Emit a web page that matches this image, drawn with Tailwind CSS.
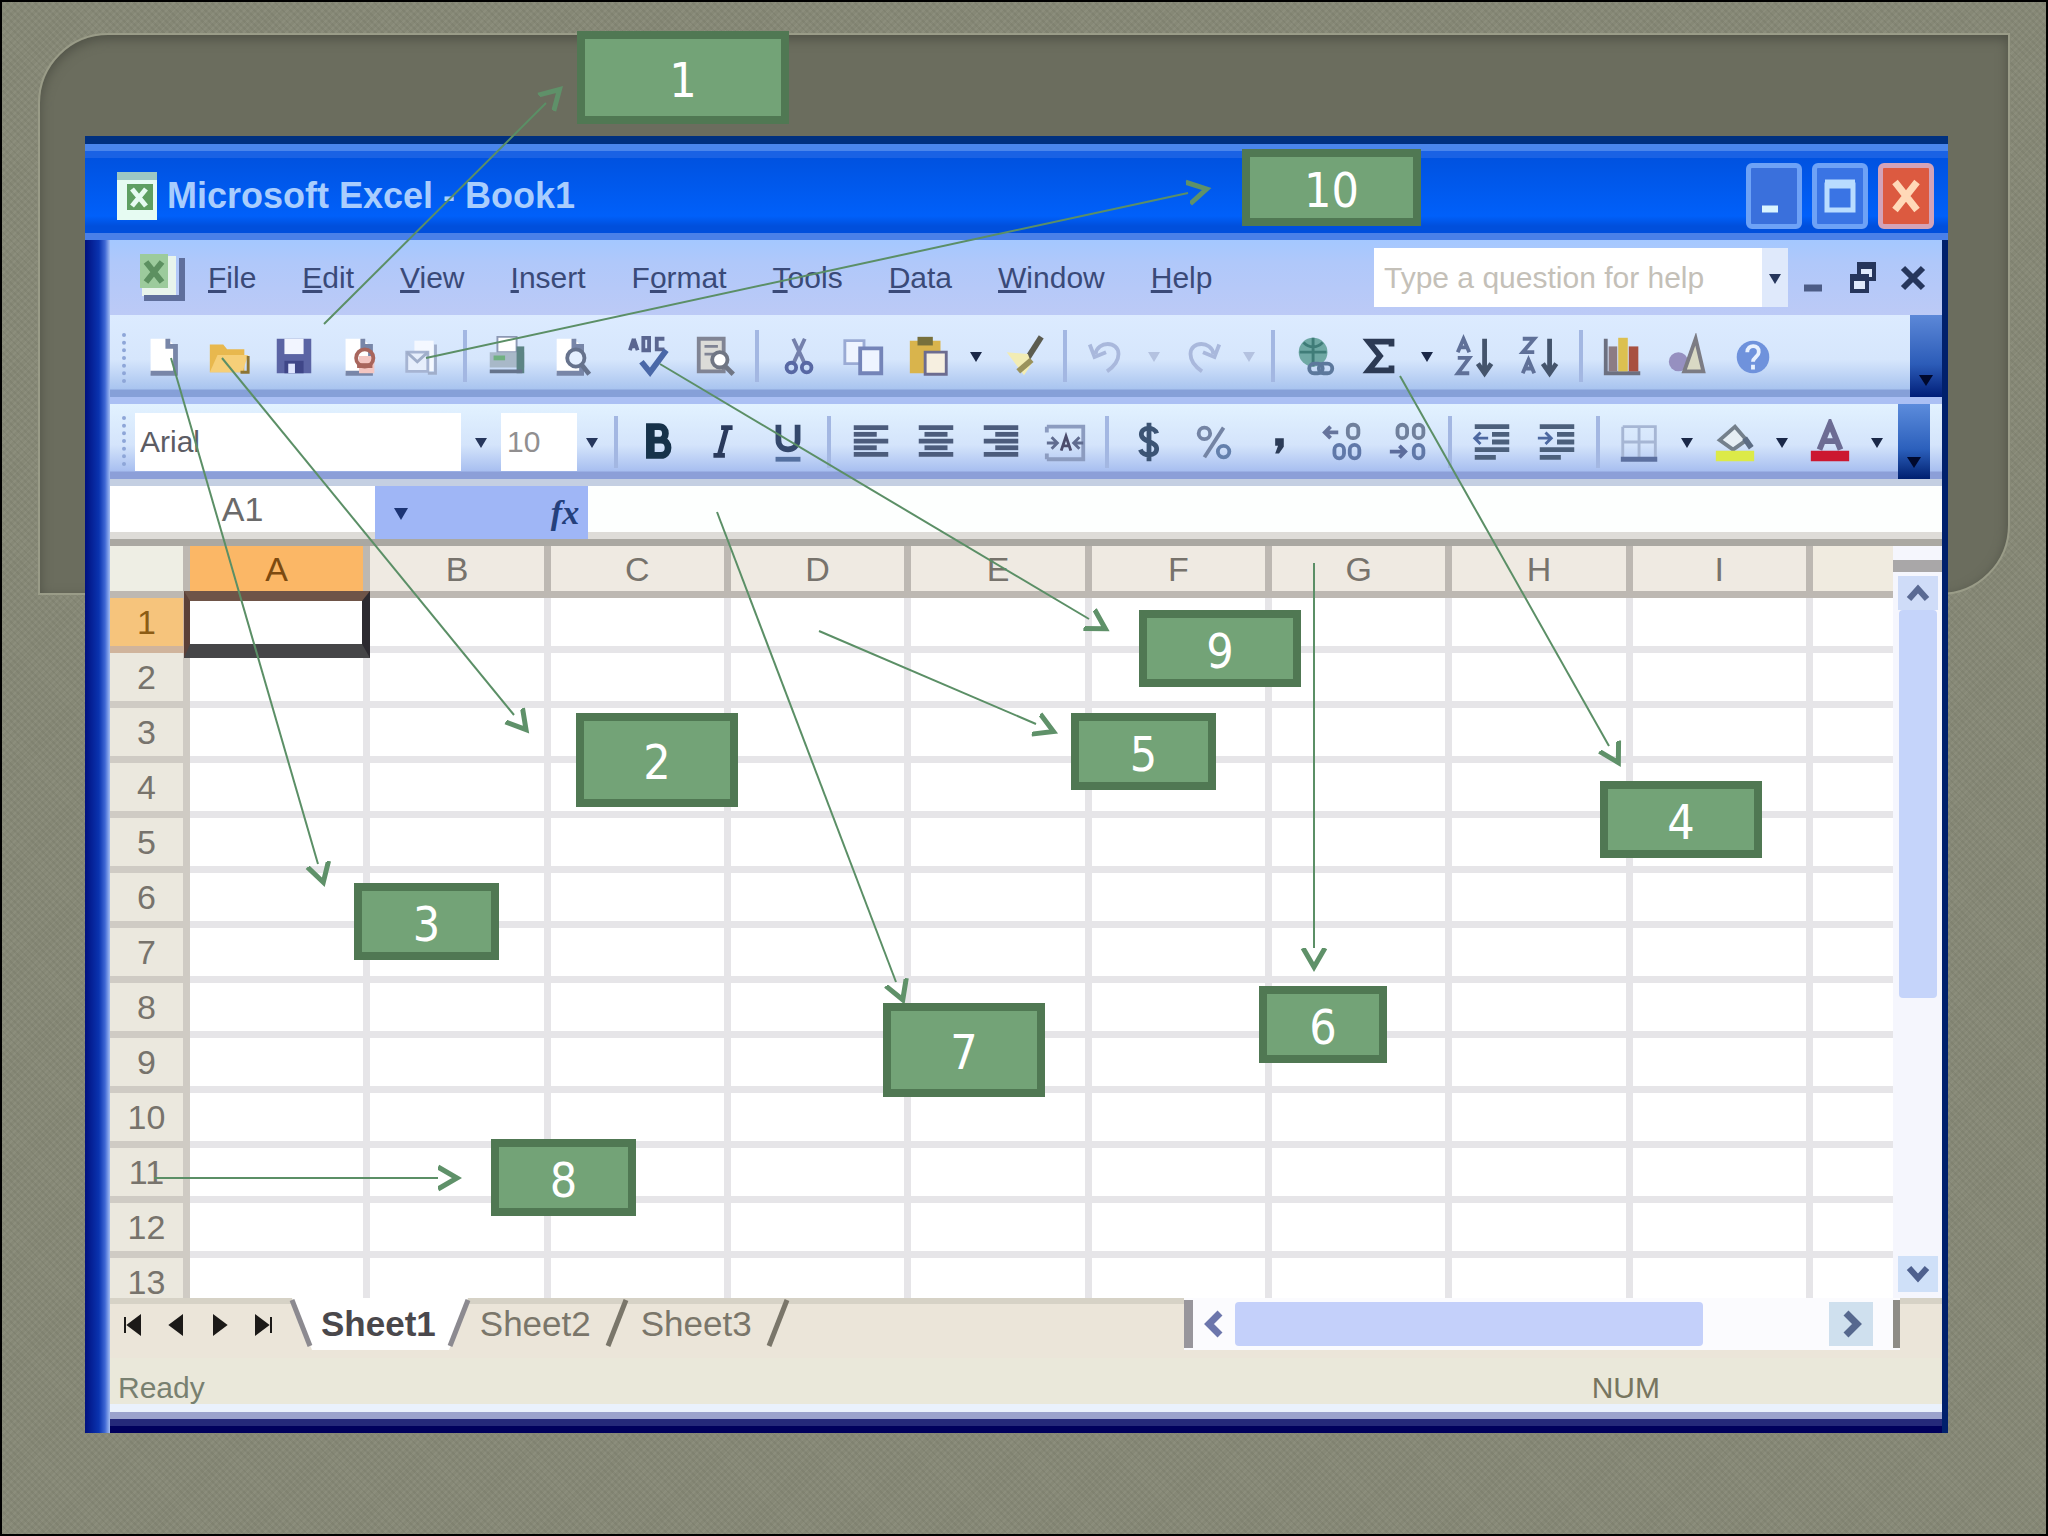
<!DOCTYPE html>
<html lang="en">
  <head>
    <meta charset="UTF-8" />
    <meta name="viewport" content="width=device-width, initial-scale=1.0" />
    <title>Microsoft Excel - Book1</title>

    <!-- Tailwind CSS -->
    <script src="https://cdn.jsdelivr.net/npm/@tailwindcss/browser@4"></script>
  </head>

  <body class="bg-[#868876] font-['Liberation_Sans',sans-serif] text-[#3a4a78]">
    <!-- Slide -->
    <main
      class="relative w-full min-h-screen overflow-hidden border-2 border-black bg-[#868876] bg-[repeating-linear-gradient(45deg,#0000000c_0_2px,transparent_2px_5px),repeating-linear-gradient(-45deg,#ffffff0c_0_2px,transparent_2px_5px)] pt-[134px] pb-[101px] pl-[83px] pr-[98px]"
    >
      <!-- Slide panel -->
      <div
        class="absolute top-[31px] left-[36px] right-[36px] h-[562px] rounded-tl-[70px] rounded-br-[70px] border-2 border-[#9a9c88] bg-[#6b6d5e] shadow-[inset_0_4px_12px_#4f5146]"
      ></div>

      <!-- Excel window -->
      <div class="relative flex flex-col bg-[#d4e2fb]">
        <!-- Title bar -->
        <header
          class="flex h-[104px] items-center bg-[linear-gradient(#00307f_0_8px,#4a86ec_8px_15px,#1a62e4_15px_22px,#0052e0_22px,#0060fa_80px,#004fdc_90px_97px,#4a80e8_97px)] pt-[15px] pr-[14px] pl-[30px]"
        >
          <svg class="h-[52px] w-[44px]" viewBox="0 0 44 52">
            <rect x="2" y="2" width="40" height="48" fill="#e6fbf2" />
            <rect x="2" y="2" width="40" height="8" fill="#9cc8c4" />
            <rect x="12" y="14" width="26" height="26" fill="#5f9f62" />
            <path d="M17 19l14 17M31 19L17 36" stroke="#e6fbf2" stroke-width="5" />
          </svg>
          <h1
            class="ml-[8px] text-[36px] leading-[44px] font-bold text-[#a9cdfd]"
          >
            Microsoft Excel - Book1
          </h1>
          <div class="ml-auto flex gap-[10px]">
            <button
              aria-label="Minimize"
              class="flex h-[66px] w-[56px] items-center justify-center rounded-[6px] border-[5px] border-[#6ea2f6] bg-[#3a70dc]"
            >
              <svg class="h-[40px] w-[36px]" viewBox="0 0 36 40">
                <path d="M6 33h16" stroke="#d9f4ff" stroke-width="7" />
              </svg>
            </button>
            <button
              aria-label="Maximize"
              class="flex h-[66px] w-[56px] items-center justify-center rounded-[6px] border-[5px] border-[#6ea2f6] bg-[#3a74e4]"
            >
              <svg class="h-[40px] w-[36px]" viewBox="0 0 36 40">
                <path
                  d="M5 9h26v25H5z"
                  fill="none"
                  stroke="#b9dcff"
                  stroke-width="5"
                />
                <path d="M3 8h30" stroke="#b9dcff" stroke-width="9" />
              </svg>
            </button>
            <button
              aria-label="Close"
              class="flex h-[66px] w-[56px] items-center justify-center rounded-[6px] border-[5px] border-[#d3a3b8] bg-[#dc5a40]"
            >
              <svg class="h-[40px] w-[36px]" viewBox="0 0 36 40">
                <path d="M7 6l22 28M29 6L7 34" stroke="#ffd9b8" stroke-width="7" />
              </svg>
            </button>
          </div>
        </header>

        <div
          class="flex flex-col border-r-[6px] border-[#00206c] bg-[linear-gradient(to_right,#00107f_0,#0a34b0_14px,#3f68d4_20px,#a4bef2_25px)] pl-[25px]"
        >
          <!-- Menu bar -->
          <nav
            class="flex h-[75px] items-center bg-[linear-gradient(#a4c8ff,#b0c8fa_30%,#bccaf6)] pr-1 pl-[24px] text-[30px]"
          >
            <svg class="h-[60px] w-[54px]" viewBox="0 0 54 60">
              <path d="M8 8h34v40H8z" fill="#e8f4ec" />
              <path d="M6 6h28v34H6z" fill="#9ccb9c" />
              <path d="M12 14l16 20M28 14L12 34" stroke="#5c9060" stroke-width="6" />
              <path d="M10 50h38V10" fill="none" stroke="#5f6f9c" stroke-width="6" />
            </svg>
            <div id="menu" class="ml-[20px] flex gap-[46px]"></div>
            <input
              type="text"
              aria-label="Ask a question"
              placeholder="Type a question for help"
              class="ml-auto h-[59px] w-[388px] bg-white px-[10px] text-[30px] placeholder:text-[#c4c0b8]"
            />
            <button
              aria-label="Question list"
              class="flex h-[59px] w-[26px] items-center justify-center bg-[#dfe9fb]"
            >
              <svg class="h-[16px] w-[16px]" viewBox="0 0 16 16">
                <path d="M2 4h12L8 14z" fill="#26365c" />
              </svg>
            </button>
            <button aria-label="Minimize book" class="flex w-[50px] justify-center">
              <svg class="h-[36px] w-[30px]" viewBox="0 0 30 36">
                <path d="M6 28h18" stroke="#4c5c86" stroke-width="7" />
              </svg>
            </button>
            <button aria-label="Restore book" class="flex w-[50px] justify-center">
              <svg class="h-[36px] w-[30px]" viewBox="0 0 30 36">
                <path
                  d="M11 4h15v15H11zM4 16h15v15H4z"
                  fill="#dfe9fb"
                  stroke="#26365c"
                  stroke-width="4"
                />
                <path d="M9 6h19M2 18h19" stroke="#26365c" stroke-width="6" />
              </svg>
            </button>
            <button aria-label="Close book" class="flex w-[50px] justify-center">
              <svg class="h-[36px] w-[30px]" viewBox="0 0 30 36">
                <path d="M5 8l20 20M25 8L5 28" stroke="#26365c" stroke-width="6" />
              </svg>
            </button>
          </nav>

          <!-- Standard toolbar -->
          <div
            class="flex h-[89px] bg-[linear-gradient(#dcebff,#d6e6fc_50%,#a9c4ef_74px,#86a0d8_75px_82px,#abc0f4_82px)] pb-[7px]"
          >
            <span
              class="mt-[18px] ml-[12px] h-[50px] border-l-4 border-dotted border-[#8ea6d8]"
            ></span>
            <div id="standard" class="ml-[5px] flex items-center"></div>
            <button
              aria-label="Standard toolbar options"
              class="ml-auto flex w-[32px] items-end justify-center bg-[linear-gradient(#5c88d8,#2c5cb8_60%,#001e78)] pb-[10px]"
            >
              <svg class="h-[14px] w-[16px]" viewBox="0 0 16 14">
                <path d="M1 2h14L8 13z" fill="#00082c" />
              </svg>
            </button>
          </div>

          <!-- Formatting toolbar -->
          <div
            class="flex h-[82px] bg-[linear-gradient(#e2f2ff,#d4e4fb_50%,#a8bff0_67px,#8c9fd8_68px_75px,#c4cfe2_75px)] pr-[12px] pb-[7px]"
          >
            <span
              class="mt-[12px] ml-[12px] h-[50px] border-l-4 border-dotted border-[#8ea6d8]"
            ></span>
            <div class="ml-[9px] flex items-center text-[30px] text-[#5c5c64]">
              <select
                aria-label="Font"
                class="h-[58px] w-[326px] appearance-none bg-white px-[5px]"
              >
                <option>Arial</option>
              </select>
              <span class="flex w-[40px] justify-center">
                <svg class="h-[16px] w-[16px]" viewBox="0 0 16 16">
                  <path d="M2 4h12L8 14z" fill="#26365c" />
                </svg>
              </span>
              <select
                aria-label="Font size"
                class="h-[58px] w-[76px] appearance-none bg-white px-[6px] text-[#918f90]"
              >
                <option>10</option>
              </select>
              <span class="flex w-[30px] justify-center">
                <svg class="h-[16px] w-[16px]" viewBox="0 0 16 16">
                  <path d="M2 4h12L8 14z" fill="#26365c" />
                </svg>
              </span>
            </div>
            <div id="formatting" class="flex items-center"></div>
            <button
              aria-label="Formatting toolbar options"
              class="ml-auto flex w-[32px] items-end justify-center bg-[linear-gradient(#5c8cdc,#2c60bc_60%,#002070)] pb-[10px]"
            >
              <svg class="h-[14px] w-[16px]" viewBox="0 0 16 14">
                <path d="M1 2h14L8 13z" fill="#00082c" />
              </svg>
            </button>
          </div>

          <!-- Formula bar -->
          <div
            class="flex h-[60px] border-b-[7px] border-[#aaa8a2] text-[34px] text-[#6a6a6a]"
          >
            <input
              type="text"
              aria-label="Name box"
              value="A1"
              class="w-[265px] border-b-[7px] border-[#dedcd8] bg-white text-center"
            />
            <div class="flex w-[213px] items-center justify-between bg-[#9fb6f6] pr-[4px] pl-[16px]">
              <button aria-label="Names">
                <svg class="h-[20px] w-[20px]" viewBox="0 0 20 20">
                  <path d="M3 5h14l-7 12z" fill="#1c3474" />
                </svg>
              </button>
              <button
                aria-label="Insert function"
                class="w-[38px] font-['Liberation_Serif',serif] text-[34px] leading-[40px] font-bold text-[#24407c] italic"
              >
                fx
              </button>
            </div>
            <input
              type="text"
              aria-label="Formula"
              class="min-w-0 flex-1 border-b-[7px] border-[#dedcd8] bg-[#fdfffe] px-2"
            />
          </div>

          <!-- Sheet -->
          <div class="flex h-[752px] bg-white">
            <div class="min-w-0 flex-1 overflow-hidden">
              <table
                class="w-full table-fixed border-separate border-spacing-0 text-[34px] leading-[30px] text-[#77736c]"
              >
                <colgroup>
                  <col class="w-[80px]" />
                  <col span="9" />
                  <col class="w-[80px]" />
                </colgroup>
                <thead>
                  <tr id="letters"></tr>
                </thead>
                <tbody id="rows"></tbody>
              </table>
            </div>
            <div class="flex w-[49px] flex-col items-center bg-[#f5f6fd] pt-[14px]">
              <span class="h-[12px] w-full bg-[#a9a7a8]"></span>
              <button
                aria-label="Scroll up"
                class="mt-[4px] flex h-[34px] w-[40px] items-center justify-center bg-[#cfdcf8]"
              >
                <svg class="h-[20px] w-[24px]" viewBox="0 0 24 20">
                  <path d="M3 16l9-10 9 10" fill="none" stroke="#5a6a94" stroke-width="6" />
                </svg>
              </button>
              <span class="h-[388px] w-[38px] rounded-[4px] bg-[#c5d4fa]"></span>
              <button
                aria-label="Scroll down"
                class="mt-auto mb-[6px] flex h-[36px] w-[40px] items-center justify-center bg-[#cfe0f8]"
              >
                <svg class="h-[20px] w-[24px]" viewBox="0 0 24 20">
                  <path d="M3 4l9 10 9-10" fill="none" stroke="#4e608e" stroke-width="6" />
                </svg>
              </button>
            </div>
          </div>

          <!-- Sheet tabs -->
          <div
            class="flex h-[60px] bg-[linear-gradient(#d6d2c6_0_6px,#ebe5d9_6px)] text-[35px] leading-[50px] text-[#7a766a]"
          >
            <div id="tab-nav" class="flex items-center pb-[6px]"></div>
            <svg class="h-[52px] w-[30px]" viewBox="0 0 30 52">
              <path d="M6 0h24v52h-4z" fill="#fff" />
              <path d="M6 2l18 46" stroke="#8c8a90" stroke-width="5" />
            </svg>
            <button class="h-[52px] bg-white px-[5px] font-bold text-[#4a484c]">
              Sheet1
            </button>
            <svg class="h-[52px] w-[34px]" viewBox="0 0 34 52">
              <path d="M0 0h27L8 52H0z" fill="#fff" />
              <path d="M27 2L9 48" stroke="#8c8a90" stroke-width="5" />
            </svg>
            <button class="h-[52px] px-[5px]">Sheet2</button>
            <svg class="h-[52px] w-[40px]" viewBox="0 0 40 52">
              <path d="M30 2L12 48" stroke="#7a766a" stroke-width="5" />
            </svg>
            <button class="h-[52px] px-[5px]">Sheet3</button>
            <svg class="h-[52px] w-[40px]" viewBox="0 0 40 52">
              <path d="M30 2L12 48" stroke="#7a766a" stroke-width="5" />
            </svg>
            <div class="mr-[42px] ml-auto flex h-[52px] w-[716px] items-center bg-[#fbfbfe]">
              <span class="h-[48px] w-[9px] bg-[#98969c]"></span>
              <button aria-label="Scroll left" class="flex w-[42px] justify-center">
                <svg class="h-[32px] w-[24px]" viewBox="0 0 24 32">
                  <path d="M18 5L7 16l11 11" fill="none" stroke="#6c76ac" stroke-width="7" />
                </svg>
              </button>
              <span class="h-[44px] w-[468px] rounded-[4px] bg-[#c4d0fa]"></span>
              <button
                aria-label="Scroll right"
                class="mr-[20px] ml-auto flex h-[44px] w-[44px] items-center justify-center bg-[#cfe0ee]"
              >
                <svg class="h-[32px] w-[24px]" viewBox="0 0 24 32">
                  <path d="M7 5l11 11L7 27" fill="none" stroke="#56688e" stroke-width="7" />
                </svg>
              </button>
              <span class="h-[48px] w-[7px] bg-[#8e8c86]"></span>
            </div>
          </div>

          <!-- Status bar -->
          <footer
            class="flex h-[46px] items-center justify-between bg-[#eae8da] pt-[14px] pr-[282px] pl-[8px] text-[30px] leading-[32px]"
          >
            <span class="text-[#788070]">Ready</span>
            <span class="text-[#77755f]">NUM</span>
          </footer>
          <div
            class="h-[29px] bg-[linear-gradient(#eaf1fc_0_8px,#9ba2cc_8px_15px,#25297a_15px_22px,#00005c_22px)]"
          ></div>
        </div>
      </div>

      <!-- Arrows -->
      <svg
        class="pointer-events-none absolute -top-[2px] -left-[2px] h-[1536px] w-[2048px]"
        viewBox="0 0 2048 1536"
        fill="none"
        stroke="#5b8f66"
        stroke-width="2"
      >
        <defs>
          <marker
            id="head"
            viewBox="0 -14 26 28"
            markerWidth="26"
            markerHeight="28"
            refX="0"
            refY="0"
            markerUnits="userSpaceOnUse"
            orient="auto"
          >
            <path d="M0 -11L19 0L0 11" fill="none" stroke="#5f9169" stroke-width="5" />
          </marker>
        </defs>
        <path marker-end="url(#head)" d="M324 324L546 103" />
        <path marker-end="url(#head)" d="M222 358L514 715" />
        <path marker-end="url(#head)" d="M171 358L318 864" />
        <path marker-end="url(#head)" d="M1400 376L1609 746" />
        <path marker-end="url(#head)" d="M819 631L1036 724" />
        <path marker-end="url(#head)" d="M1314 563V948" />
        <path marker-end="url(#head)" d="M717 512L896 982" />
        <path marker-end="url(#head)" d="M154 1178H438" />
        <path marker-end="url(#head)" d="M660 364L1089 619" />
        <path marker-end="url(#head)" d="M426 358L1188 193" />
      </svg>

      <!-- Number labels -->
      <div
        class="absolute inset-0 font-['DejaVu_Sans_Condensed','DejaVu_Sans',sans-serif] text-[48px] leading-none text-white *:absolute *:flex *:items-center *:justify-center *:border-8 *:border-[#507853] *:bg-[#73a377] *:pt-[4px]"
      >
        <div class="top-[29px] left-[575px] h-[93px] w-[212px]">1</div>
        <div class="top-[711px] left-[574px] h-[94px] w-[162px]">2</div>
        <div class="top-[881px] left-[352px] h-[77px] w-[145px]">3</div>
        <div class="top-[779px] left-[1598px] h-[77px] w-[162px]">4</div>
        <div class="top-[711px] left-[1069px] h-[77px] w-[145px]">5</div>
        <div class="top-[984px] left-[1257px] h-[77px] w-[128px]">6</div>
        <div class="top-[1001px] left-[881px] h-[94px] w-[162px]">7</div>
        <div class="top-[1137px] left-[489px] h-[77px] w-[145px]">8</div>
        <div class="top-[608px] left-[1137px] h-[77px] w-[162px]">9</div>
        <div class="top-[147px] left-[1240px] h-[77px] w-[179px]">10</div>
      </div>
    </main>

    <script>
      // Menu entries: the letter after "_" is the access key
      const menu = [
        "_File",
        "_Edit",
        "_View",
        "_Insert",
        "F_ormat",
        "_Tools",
        "_Data",
        "_Window",
        "_Help",
      ];
      document.getElementById("menu").innerHTML = menu
        .map((m) => `<button>${m.replace(/_(.)/, "<u>$1</u>")}</button>`)
        .join("");

      // Icons, drawn on a 48 x 48 grid
      const page = (x = 10) =>
        `<path d="M${x} 6h18l8 8v28H${x}z" fill="#fff"/><path d="M${x + 18} 6v8h8v28H${x}" fill="none" stroke="#7886a8" stroke-width="5"/>`;
      const bars = (rows) =>
        rows
          .map(([a, b], i) => `<path d="M${a} ${9 + i * 7}H${b}" stroke="#4c5c7c" stroke-width="5"/>`)
          .join("");
      const icons = {
        New: page(),
        Open: `<path d="M4 12h14l4 5h18v24H4z" fill="#e8b84e"/><path d="M4 41l8-18h32l-6 18z" fill="#f6cf78"/><path d="M36 41h8V24" stroke="#8c7434" stroke-width="3" fill="none"/>`,
        Save: `<path d="M6 6h36v36H6z" fill="#5b64a4"/><path d="M14 6h20v16H14z" fill="#f2f5ff"/><path d="M14 29h20v13H14z" fill="#3f4688"/><path d="M18 32h7v10h-7z" fill="#dfe6ff"/>`,
        Permission: `${page()}<path d="M24 24h16v18H24z" fill="#f3c6c2"/><circle cx="30" cy="26" r="9" fill="none" stroke="#a8655c" stroke-width="4"/><path d="M22 34h16" stroke="#a8655c" stroke-width="5"/>`,
        "E-mail": `<path d="M14 8h20v32H14z" fill="#f4f8ff"/><path d="M6 20h22v20H6z" fill="#e6eefc" stroke="#a6b4d2" stroke-width="3"/><path d="M6 20l11 10 11-10M36 12v30h-8" stroke="#a0aeca" stroke-width="3" fill="none"/>`,
        Print: `<path d="M14 4h20v16H14z" fill="#fff" stroke="#8c98b4" stroke-width="2"/><path d="M6 20h36v16H6z" fill="#a8b8c8"/><path d="M34 14h8v28h-8z" fill="#5c8484"/><path d="M6 40h34" stroke="#66748c" stroke-width="4"/><path d="M10 26h12" stroke="#70b080" stroke-width="5"/>`,
        "Print preview": `${page(8)}<circle cx="28" cy="26" r="9" fill="#e4efff" stroke="#66728c" stroke-width="4"/><path d="M34 33l8 10" stroke="#66728c" stroke-width="5"/>`,
        Spelling: `<path d="M6 6l-4 12M6 6l4 12M3 14h6M16 5v13h6V5zM38 6h-8v11h8" fill="none" stroke="#5a6690" stroke-width="4"/><path d="M14 30l9 11L40 18" fill="none" stroke="#4a68a8" stroke-width="6"/>`,
        Research: `<path d="M6 6h26v34H6z" fill="#dcdcd8" stroke="#808494" stroke-width="4"/><path d="M12 14h14M12 22h10" stroke="#808494" stroke-width="3"/><circle cx="28" cy="28" r="8" fill="#fff" stroke="#707684" stroke-width="4"/><path d="M33 34l9 9" stroke="#707684" stroke-width="5"/>`,
        Cut: `<path d="M18 6l12 26M30 6L18 32" stroke="#7480ac" stroke-width="4"/><circle cx="16" cy="36" r="5" fill="none" stroke="#5868a4" stroke-width="4"/><circle cx="32" cy="36" r="5" fill="none" stroke="#5868a4" stroke-width="4"/>`,
        Copy: `<path d="M4 8h20v24H4z" fill="#eef4ff" stroke="#9aaad4" stroke-width="3"/><path d="M20 16h22v26H20z" fill="#eef4ff" stroke="#7484b8" stroke-width="4"/>`,
        Paste: `<path d="M4 8h32v34H4z" fill="#d9b44c"/><path d="M12 4h16v9H12z" fill="#77703c"/><path d="M20 20h22v23H20z" fill="#f6efe0" stroke="#6c6c90" stroke-width="3"/>`,
        "Format painter": `<path d="M42 4L28 26" stroke="#5c5c50" stroke-width="6"/><path d="M6 20l22 2 4 10-8 12z" fill="#f2ecb4"/><path d="M18 40l14-12" stroke="#9a925c" stroke-width="6"/>`,
        Undo: `<path d="M12 22C14 8 36 8 36 22c0 8-6 14-12 18M6 12l5 13 12-5" fill="none" stroke="#a9b8dc" stroke-width="4"/>`,
        Redo: `<path d="M36 22C34 8 12 8 12 22c0 8 6 14 12 18M42 12l-5 13-12-5" fill="none" stroke="#a9b8dc" stroke-width="4"/>`,
        Hyperlink: `<circle cx="22" cy="20" r="15" fill="#6fa8a4"/><path d="M8 20h28M22 5v30M12 10c6 6 14 6 20 0" stroke="#3f7c78" stroke-width="3" fill="none"/><rect x="18" y="32" width="14" height="10" rx="5" fill="none" stroke="#5c789c" stroke-width="4"/><rect x="28" y="32" width="14" height="10" rx="5" fill="none" stroke="#5c789c" stroke-width="4"/>`,
        AutoSum: `<path d="M36 14V9H12l12 15-12 15h24v-5" fill="none" stroke="#2c3a54" stroke-width="6"/>`,
        "Sort ascending": `<path d="M6 20l6-14 6 14M8 15h8M6 26h12L6 42h12" fill="none" stroke="#5f7098" stroke-width="4"/><path d="M34 6v34M27 32l7 10 7-10" fill="none" stroke="#44546c" stroke-width="5"/>`,
        "Sort descending": `<path d="M6 6h12L6 20h12M6 42l6-14 6 14M8 37h8" fill="none" stroke="#5f7098" stroke-width="4"/><path d="M34 6v34M27 32l7 10 7-10" fill="none" stroke="#44546c" stroke-width="5"/>`,
        "Chart wizard": `<path d="M6 6v36h36" stroke="#6c7080" stroke-width="4" fill="none"/><path d="M9 14h9v26H9z" fill="#8c7c84"/><path d="M19 5h10v35H19z" fill="#dcc050"/><path d="M30 14h10v26H30z" fill="#a85040"/>`,
        Drawing: `<circle cx="14" cy="30" r="10" fill="#9690c0"/><path d="M20 40L32 6l8 34z" fill="#d9d9c4" stroke="#7c7c84" stroke-width="4"/>`,
        Help: `<circle cx="24" cy="25" r="17" fill="#6f92dc"/><path d="M18 20c0-9 13-8 12 0 0 5-6 5-6 10M24 33v5" fill="none" stroke="#e8f1ff" stroke-width="4"/>`,
        Bold: `<path d="M15 8h10c9 0 9 14 0 14H15zM15 22h12c10 0 10 16 0 16H15zM17 8v30" fill="none" stroke="#16324a" stroke-width="7"/>`,
        Italic: `<path d="M22 9h12M14 38h12M28 9l-8 29" fill="none" stroke="#2a3a5c" stroke-width="5"/>`,
        Underline: `<path d="M14 6v16c0 13 20 13 20 0V6" fill="none" stroke="#34486c" stroke-width="6"/><path d="M11 42h26" stroke="#5470a0" stroke-width="5"/>`,
        "Align left": bars([[6, 42], [6, 30], [6, 42], [6, 30], [6, 42]]),
        Center: bars([[6, 42], [12, 36], [6, 42], [12, 36], [6, 42]]),
        "Align right": bars([[6, 42], [18, 42], [6, 42], [18, 42], [6, 42]]),
        "Merge and center": `<path d="M4 8h38v34H4M42 8v34M4 8v6M4 36v6" fill="none" stroke="#8c9cc0" stroke-width="4"/><path d="M4 25h9M9 19l6 6-6 6M42 25h-8M38 19l-6 6 6 6" fill="none" stroke="#606c90" stroke-width="3"/><path d="M19 33l5-15 5 15M21 28h6" fill="none" stroke="#4c4c6c" stroke-width="3"/>`,
        Currency: `<path d="M32 15c-2-7-16-7-16 1s16 7 16 15-14 9-17 1M24 4v40" fill="none" stroke="#3c5474" stroke-width="5"/>`,
        Percent: `<circle cx="14" cy="15" r="6" fill="none" stroke="#7484a4" stroke-width="4"/><circle cx="34" cy="34" r="6" fill="none" stroke="#6480ac" stroke-width="4"/><path d="M34 9L14 40" stroke="#7484a4" stroke-width="4"/>`,
        Comma: `<path d="M20 20h9v9l-5 7h-4l3-8h-3z" fill="#2c3c58"/>`,
        "Increase decimal": `<path d="M18 14H4M10 8l-6 6 6 6" fill="none" stroke="#66749c" stroke-width="4"/><rect x="28" y="6" width="11" height="14" rx="5" fill="none" stroke="#70809c" stroke-width="4"/><rect x="14" y="27" width="10" height="14" rx="5" fill="none" stroke="#6078a8" stroke-width="4"/><rect x="30" y="27" width="10" height="14" rx="5" fill="none" stroke="#6078a8" stroke-width="4"/>`,
        "Decrease decimal": `<rect x="12" y="6" width="10" height="14" rx="5" fill="none" stroke="#70809c" stroke-width="4"/><rect x="29" y="6" width="10" height="14" rx="5" fill="none" stroke="#70809c" stroke-width="4"/><path d="M4 34h16M14 28l6 6-6 6" fill="none" stroke="#5c6c9c" stroke-width="4"/><rect x="29" y="27" width="10" height="14" rx="5" fill="none" stroke="#6078a8" stroke-width="4"/>`,
        "Decrease indent": `<path d="M6 8h36M24 16h18M24 24h18M6 32h36M6 40h22" stroke="#4c607c" stroke-width="5"/><path d="M20 20H6M12 14l-6 6 6 6" fill="none" stroke="#4c68a0" stroke-width="3"/>`,
        "Increase indent": `<path d="M6 8h36M24 16h18M24 24h18M6 32h36M6 40h22" stroke="#4c607c" stroke-width="5"/><path d="M4 20h14M12 14l6 6-6 6" fill="none" stroke="#4c68a0" stroke-width="3"/>`,
        Borders: `<path d="M6 8h34v32M6 8v32M23 8v32M6 24h34" fill="none" stroke="#a6b6d4" stroke-width="3"/><path d="M4 42h38" stroke="#5c70a0" stroke-width="5"/>`,
        "Fill color": `<path d="M8 22L24 8l12 14-14 10z" fill="#e6eef4" stroke="#74808c" stroke-width="4"/><path d="M34 20l7 10" stroke="#5c6c84" stroke-width="6"/><path d="M4 33h40v11H4z" fill="#dcea48"/>`,
        "Font color": `<path d="M13 32L24 5l11 27M17 23h14" fill="none" stroke="#6c6c94" stroke-width="6"/><path d="M4 33h40v11H4z" fill="#cc1830"/>`,
      };

      // "|" is a separator, " " a gap, "v" a drop-down arrow, "-" a disabled one
      const parts = {
        "|": `<span class="flex w-[18px] justify-center"><span class="h-[52px] w-[4px] bg-[#a3b7e2]"></span></span>`,
        " ": `<span class="w-[14px]"></span>`,
        v: `<button aria-label="More" class="flex w-[30px] justify-center"><svg class="h-[16px] w-[16px]" viewBox="0 0 16 16"><path d="M2 4h12L8 14z" fill="#1a2848"/></svg></button>`,
        "-": `<button aria-label="More" class="flex w-[30px] justify-center"><svg class="h-[16px] w-[16px]" viewBox="0 0 16 16"><path d="M2 4h12L8 14z" fill="#b4c2e0"/></svg></button>`,
      };
      const fillBar = (id, names) => {
        document.getElementById(id).innerHTML = names
          .map(
            (n) =>
              parts[n] ||
              `<button aria-label="${n}" class="flex h-[64px] w-[65px] items-center justify-center"><svg class="h-[46px] w-[46px]" viewBox="0 0 48 48">${icons[n]}</svg></button>`
          )
          .join("");
      };
      fillBar("standard", [
        "New", "Open", "Save", "Permission", "E-mail", "|",
        "Print", "Print preview", " ", "Spelling", "Research", "|",
        "Cut", "Copy", "Paste", "v", "Format painter", "|",
        "Undo", "-", "Redo", "-", "|",
        "Hyperlink", "AutoSum", "v", "Sort ascending", "Sort descending", "|",
        "Chart wizard", "Drawing", "Help",
      ]);
      fillBar("formatting", [
        "|", "Bold", "Italic", "Underline", "|",
        "Align left", "Center", "Align right", "Merge and center", "|",
        "Currency", "Percent", "Comma", "Increase decimal", "Decrease decimal", "|",
        "Decrease indent", "Increase indent", "|",
        "Borders", "v", "Fill color", "v", "Font color", "v",
      ]);

      // Sheet
      const head = "h-[52px] border-r-[7px] border-b-[7px] border-[#bdb8b2] font-normal";
      const letters = "ABCDEFGHI".split("");
      document.getElementById("letters").innerHTML =
        `<th class="${head} bg-[#eeeee4]"></th>` +
        letters
          .map((l) =>
            l === "A"
              ? `<th class="${head} bg-[#fbb766] text-[#7c4a10]">${l}</th>`
              : `<th class="${head} bg-[#efeae2]">${l}</th>`
          )
          .join("") +
        `<th class="h-[52px] border-b-[7px] border-[#bdb8b2] bg-[#f0ebe0]"></th>`;

      const cell = `<td class="border-r-[7px] border-b-[7px] border-[#e6e5e8]"></td>`;
      const active = `<td class="relative border-r-[7px] border-b-[7px] border-[#e6e5e8]"><span class="absolute -top-[7px] -right-[7px] -bottom-[12px] -left-[6px] border-t-[10px] border-r-[8px] border-b-[14px] border-l-[6px] border-t-[#6e5448] border-r-[#2c2a30] border-b-[#454547] border-l-[#5c4038]"></span></td>`;
      let rows = "";
      for (let r = 1; r <= 13; r++) {
        const side =
          r === 1
            ? `<th class="h-[55px] border-r-[7px] border-b-[7px] border-[#d0b49c] bg-[#f6c47c] font-normal text-[#8c5c14]">1</th>`
            : `<th class="h-[55px] border-r-[7px] border-b-[7px] border-[#cfcbc4] bg-[#ebe8de] font-normal">${r}</th>`;
        rows += `<tr>${side}${r === 1 ? active : cell}${cell.repeat(8)}<td class="border-b-[7px] border-[#e6e5e8]"></td></tr>`;
      }
      document.getElementById("rows").innerHTML = rows;

      // Tab navigation
      const nav = {
        "First sheet": "M5 4v16M20 3v18L8 12z",
        "Previous sheet": "M18 3v18L6 12z",
        "Next sheet": "M6 3v18l12-9z",
        "Last sheet": "M19 4v16M4 3v18l12-9z",
      };
      document.getElementById("tab-nav").innerHTML = Object.entries(nav)
        .map(
          ([n, d]) =>
            `<button aria-label="${n}" class="flex w-[44px] justify-center"><svg class="h-[24px] w-[24px]" viewBox="0 0 24 24"><path d="${d}" fill="#1c1a18" stroke="#1c1a18" stroke-width="2"/></svg></button>`
        )
        .join("");
    </script>
  </body>
</html>
